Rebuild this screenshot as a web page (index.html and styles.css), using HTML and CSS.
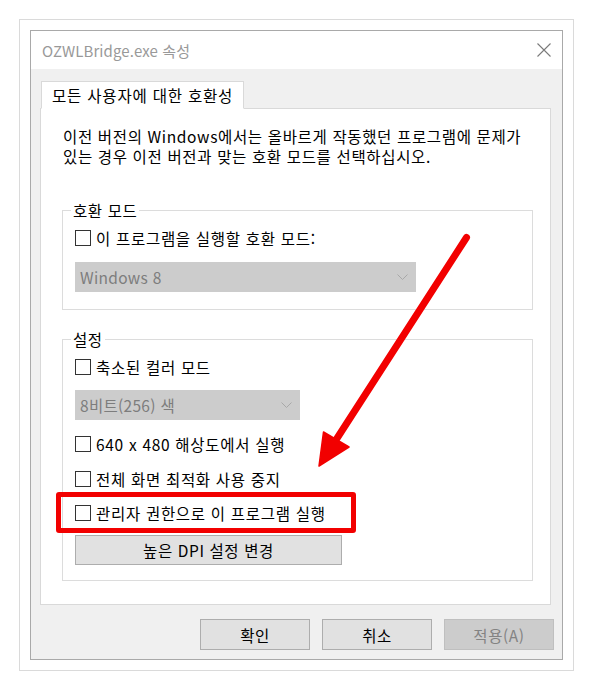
FILE: index.html
```html
<!DOCTYPE html>
<html lang="ko">
<head>
<meta charset="utf-8">
<title>OZWLBridge.exe 속성</title>
<link rel="stylesheet" href="styles.css">
</head>
<body>
<div class="frame">
  <div class="dialog">
    <div class="titlebar">
      <span class="title">OZWLBridge.exe 속성</span>
      <svg class="close" width="14" height="14" viewBox="0 0 14 14"><path d="M0.5 0.5 L13.5 13.5 M13.5 0.5 L0.5 13.5" stroke="#7a7a7a" stroke-width="1.1" fill="none"/></svg>
    </div>
    <div class="body">
      <div class="tabs"><div class="tab">모든 사용자에 대한 호환성</div></div>
      <div class="panel">
        <p class="desc">이전 버전의 Windows에서는 올바르게 작동했던 프로그램에 문제가<br>있는 경우 이전 버전과 맞는 호환 모드를 선택하십시오.</p>
        <fieldset class="group group-compat">
          <legend>호환 모드</legend>
          <label class="check row-first"><span class="box"></span><span>이 프로그램을 실행할 호환 모드:</span></label>
          <div class="select select-wide"><span>Windows 8</span><svg class="chev" width="11" height="6" viewBox="0 0 11 6"><path d="M0.5 0.5 L5.5 5.5 L10.5 0.5" stroke="#a8a8a8" fill="none"/></svg></div>
        </fieldset>
        <fieldset class="group group-settings">
          <legend>설정</legend>
          <label class="check row-first"><span class="box"></span><span>축소된 컬러 모드</span></label>
          <div class="select select-narrow"><span>8비트(256) 색</span><svg class="chev" width="11" height="6" viewBox="0 0 11 6"><path d="M0.5 0.5 L5.5 5.5 L10.5 0.5" stroke="#a8a8a8" fill="none"/></svg></div>
          <label class="check row-640"><span class="box"></span><span>640 x 480 해상도에서 실행</span></label>
          <label class="check row-full"><span class="box"></span><span>전체 화면 최적화 사용 중지</span></label>
          <label class="check row-admin"><span class="box"></span><span>관리자 권한으로 이 프로그램 실행</span></label>
          <button class="btn btn-dpi" type="button">높은 DPI 설정 변경</button>
        </fieldset>
      </div>
      <div class="actions">
        <button class="btn btn-action" type="button">확인</button>
        <button class="btn btn-action" type="button">취소</button>
        <button class="btn btn-action btn-disabled" type="button">적용(A)</button>
      </div>
    </div>
  </div>
</div>
<div class="highlight"></div>
<svg class="arrow" width="592" height="690" viewBox="0 0 592 690">
  <line x1="466.5" y1="237.5" x2="334" y2="443" stroke="#f20000" stroke-width="7" stroke-linecap="round"/>
  <polygon points="319,466 323.5,432 349,447" fill="#f20000" stroke="#f20000" stroke-width="1.5" stroke-linejoin="round"/>
</svg>
</body>
</html>
```
FILE: styles.css
```css
html, body {
  margin: 0;
  padding: 0;
  background: #ffffff;
}
body {
  position: relative;
  width: 592px;
  height: 690px;
  overflow: hidden;
  font-family: "Noto Sans CJK KR", "Noto Sans", sans-serif;
  font-size: 15.5px;
  color: #000;
}
.frame {
  position: relative;
  box-sizing: border-box;
  margin: 19px 0 0 19px;
  width: 555px;
  height: 652px;
  border: 1px solid #dadada;
  background: #ffffff;
  padding: 10px;
}
.frame::before {
  content: "";
  position: absolute;
  left: 4px;
  bottom: 6px;
  width: 46%;
  height: 30%;
  box-shadow: -6px 9px 9px rgba(0, 0, 0, 0.5);
  transform: rotate(-2.5deg);
  z-index: -1;
}
.dialog {
  box-sizing: border-box;
  width: 533px;
  height: 630px;
  border: 1px solid #a9a9a9;
  display: flex;
  flex-direction: column;
  background: #f0f0f0;
}
.titlebar {
  height: 38px;
  background: #ffffff;
  display: flex;
  align-items: center;
  justify-content: space-between;
  padding: 0 11px 0 11px;
}
.title {
  color: #999999;
  font-size: 15px;
  letter-spacing: 0.1px;
}
.close {
  display: block;
}
.body {
  flex: 1;
  display: flex;
  flex-direction: column;
  padding: 12px 0 0 0;
}
.tabs {
  display: flex;
  padding-left: 10px;
}
.tab {
  position: relative;
  box-sizing: border-box;
  width: 203px;
  height: 28px;
  margin-bottom: -1px;
  background: #ffffff;
  border: 1px solid #d9d9d9;
  border-bottom: 1px solid #ffffff;
  display: flex;
  align-items: center;
  padding-left: 10px;
  letter-spacing: 0.8px;
  line-height: 20px;
}
.panel {
  box-sizing: border-box;
  margin-left: 9px;
  width: 511px;
  height: 497px;
  background: #ffffff;
  border: 1px solid #d9d9d9;
  padding: 17px 17px 0 21px;
}
.desc {
  margin: 0 0 0 1px;
  line-height: 20px;
  letter-spacing: 0.65px;
  white-space: nowrap;
}
.group {
  box-sizing: border-box;
  margin: 0;
  width: 471px;
  border: 1px solid #dcdcdc;
  padding: 0 0 0 12px;
  min-width: 0;
}
.group legend {
  padding: 0 2px;
  margin-left: -4px;
  line-height: 20px;
  letter-spacing: 0.6px;
}
.group-compat {
  margin-top: 34px;
  height: 110px;
}
.group-settings {
  margin-top: 19px;
  height: 252px;
}
.check {
  display: flex;
  align-items: center;
  height: 20px;
  line-height: 20px;
  letter-spacing: 0.7px;
}
.box {
  box-sizing: border-box;
  width: 16px;
  height: 16px;
  border: 1px solid #333333;
  background: #ffffff;
  margin-right: 5px;
  flex: none;
}
.row-first { margin-top: 8px; }
.row-640 { margin-top: 14px; }
.row-full { margin-top: 15px; }
.row-admin { margin-top: 14px; }
.select {
  box-sizing: border-box;
  height: 30px;
  background: #cccccc;
  border: 1px solid #cccccc;
  display: flex;
  align-items: center;
  justify-content: space-between;
  padding: 0 7px 0 4px;
  color: #7d7d7d;
  letter-spacing: 0.3px;
}
.select-wide {
  width: 341px;
  margin-top: 14px;
}
.select-narrow {
  width: 225px;
  margin-top: 13px;
}
.chev { display: block; }
.btn {
  box-sizing: border-box;
  height: 30px;
  background: #e1e1e1;
  border: 1px solid #adadad;
  font-family: "Noto Sans CJK KR", "Noto Sans", sans-serif;
  font-size: 15.5px;
  color: #000;
  padding: 0;
  letter-spacing: 0.6px;
  display: flex;
  align-items: center;
  justify-content: center;
}
.btn-dpi {
  width: 267px;
  margin-top: 12px;
}
.actions {
  display: flex;
  justify-content: flex-end;
  gap: 12px;
  margin-top: 14px;
  padding-right: 8px;
}
.btn-action {
  width: 110px;
  height: 31px;
}
.btn-disabled {
  background: #cccccc;
  border-color: #bfbfbf;
  color: #838383;
}
.highlight {
  position: absolute;
  left: 56px;
  top: 492px;
  width: 300px;
  height: 41px;
  box-sizing: border-box;
  border: 5px solid #f20000;
  border-radius: 3px;
}
.arrow {
  position: absolute;
  left: 0;
  top: 0;
}
```
